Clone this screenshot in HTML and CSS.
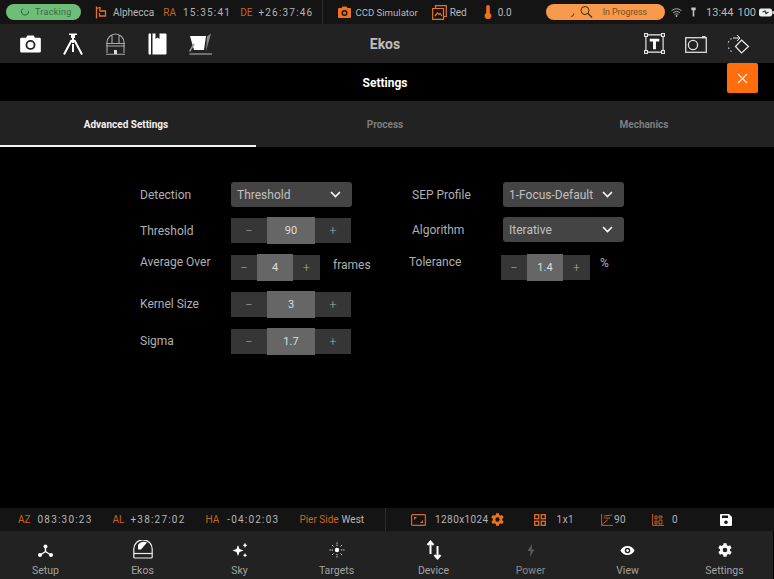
FILE: index.html
```html
<!DOCTYPE html>
<html lang="en">
<head>
  <meta charset="UTF-8" />
  <title>Ekos Settings</title>
  <link rel="stylesheet" href="styles.css">
</head>
<body>
  <div class="status-top">
    <div class="pill-green">
      <svg width="10" height="10" viewBox="0 0 10 10"><path d="M3 1.5A3.6 3.6 0 1 0 8.5 4" fill="none" stroke="#2f5f3c" stroke-width="1"/></svg>
      <span>Tracking</span>
    </div>
    <svg class="flag" width="12" height="13" viewBox="0 0 12 13"><path d="M1.5 0.5V12.5M1.5 2.5L5 1.5V5H10.5V10H4.5V7" fill="none" stroke="#e8722a" stroke-width="1.3"/></svg>
    <span class="txt alphecca">Alphecca</span>
    <span class="lbl ra">RA</span><span class="num val-ra">15:35:41</span>
    <span class="lbl de">DE</span><span class="num val-de">+26:37:46</span>
    <span class="sep sep-top"></span>
    <svg class="ccd" width="13" height="12" viewBox="0 0 13 12"><path fill-rule="evenodd" d="M1 2H3.5L4.5 .5H8.5L9.5 2H12A1 1 0 0 1 13 3V11A1 1 0 0 1 12 12H1A1 1 0 0 1 0 11V3A1 1 0 0 1 1 2ZM6.5 4A3 3 0 1 0 6.5 10A3 3 0 1 0 6.5 4ZM6.5 5.4A1.6 1.6 0 1 1 6.5 8.6A1.6 1.6 0 1 1 6.5 5.4Z" fill="#f0701c"/></svg>
    <span class="txt ccd-name">CCD Simulator</span>
    <svg class="filter" width="15" height="15" viewBox="0 0 15 15"><path d="M3.5 3V.7H14.3V11.5H12M.7 3.5H11.5V14.3H.7ZM3 11L5.5 8L7 9.5L8 8.5L10 11" fill="none" stroke="#e8722a" stroke-width="1.2"/></svg>
    <span class="txt red">Red</span>
    <svg class="thermo" width="8" height="14" viewBox="0 0 8 14"><path d="M2.2 1.8A1.8 1.8 0 0 1 5.8 1.8V8A3.4 3.4 0 1 1 2.2 8Z" fill="#f0701c"/></svg>
    <span class="txt temp">0.0</span>
    <div class="pill-orange">
      <svg width="24" height="14" viewBox="0 0 24 14"><path d="M1 11.5Q3.5 11.5 4 8.5" fill="none" stroke="#4a2a10" stroke-width=".9"/><circle cx="15" cy="5.5" r="4" fill="none" stroke="#4a2a10" stroke-width="1"/><path d="M18 8.5L22 12.5" stroke="#4a2a10" stroke-width="1.1"/></svg>
      <span>In Progress</span>
    </div>
    <svg class="wifi" width="11" height="9" viewBox="0 0 11 9"><path d="M.5 2.7Q5.5-1.3 10.5 2.7M2 4.6Q5.5 1.8 9 4.6M3.5 6.4Q5.5 4.8 7.5 6.4" fill="none" stroke="#bbb" stroke-width=".9"/><circle cx="5.5" cy="8" r=".9" fill="#bbb"/></svg>
    <svg class="key" width="5" height="10" viewBox="0 0 5 10"><path d="M.3 .5H4.7V3.2H3.3V9.5H1.7V3.2H.3Z" fill="#c4c4c4"/></svg>
    <span class="txt clock">13:44</span>
    <span class="txt batt-num">100</span>
    <svg class="batt" width="15" height="9" viewBox="0 0 15 9"><rect x="0" y=".5" width="13" height="8" rx="2" fill="#eee"/><rect x="13.4" y="3" width="1.4" height="3" fill="#eee"/><path d="M3.5 4L6 3L7 5.5L9.5 4" fill="none" stroke="#333" stroke-width="1.2"/></svg>
  </div>

  <div class="toolbar">
    <div class="tool-group">
      <svg class="tool" width="23" height="18" viewBox="0 0 24 20"><path fill-rule="evenodd" d="M2 3H7L8.5 .5H15.5L17 3H22A1.5 1.5 0 0 1 23.5 4.5V18A1.5 1.5 0 0 1 22 19.5H2A1.5 1.5 0 0 1 .5 18V4.5A1.5 1.5 0 0 1 2 3ZM12 5.5A5.5 5.5 0 1 0 12 16.5A5.5 5.5 0 1 0 12 5.5ZM12 7.5A3.5 3.5 0 1 1 12 14.5A3.5 3.5 0 1 1 12 7.5Z" fill="#fff"/></svg>
      <svg class="tool" width="20" height="22" viewBox="0 0 20 22"><path d="M6 .5H14V2H12V5H8V2H6Z" fill="#fff"/><path d="M10 5V10M8.7 7L1 21.5M11.3 7L19 21.5M10 11V19" stroke="#fff" stroke-width="2" fill="none"/></svg>
      <svg class="tool" width="21" height="22" viewBox="0 0 21 22"><path d="M1 21.3H20M2 20V9.5A8.5 8.5 0 0 1 19 9.5V20M1 10.5H20M1 13H20M7 1.5V10.5M14 1.5V10.5" fill="none" stroke="#a8a8a8" stroke-width="1.1"/><path d="M9 17H12V21H9Z" fill="#ddd"/></svg>
      <svg class="tool" width="19" height="22" viewBox="0 0 19 22"><path d="M.5 1.5A1 1 0 0 1 1.5 .5H3V21.5H1.5A1 1 0 0 1 .5 20.5ZM4.5 .5H7.5V6L9.5 4.5L11.5 6V.5H17.5A1 1 0 0 1 18.5 1.5V20.5A1 1 0 0 1 17.5 21.5H4.5Z" fill="#fff"/></svg>
      <svg class="tool" width="23" height="22" viewBox="0 0 23 22"><path d="M1 3H17L15 17H5Z" fill="#fff"/><path d="M18 3.5L22 .5L17 18" fill="#8a8a8a"/><path d="M.5 21H23" stroke="#999" stroke-width="1.3"/><path d="M.5 18.5L5 11" stroke="#999" stroke-width="1.5"/></svg>
    </div>
    <div class="app-title">Ekos</div>
    <div class="tool-group tool-group-right">
      <svg class="tool" width="21" height="21" viewBox="0 0 22 22"><path d="M2 2H20V20H2Z" fill="none" stroke="#eee" stroke-width="1.2"/><g fill="#222" stroke="#eee" stroke-width="1.1"><rect x=".6" y=".6" width="3" height="3"/><rect x="18.4" y=".6" width="3" height="3"/><rect x=".6" y="18.4" width="3" height="3"/><rect x="18.4" y="18.4" width="3" height="3"/></g><path d="M6 6H16V9H12.5V17H9.5V9H6Z" fill="#fff"/></svg>
      <svg class="tool" width="22" height="18" viewBox="0 0 22 18"><rect x=".7" y="2.7" width="20.6" height="14.6" fill="none" stroke="#ddd" stroke-width="1.3"/><circle cx="8" cy="10" r="4.6" fill="none" stroke="#ddd" stroke-width="1.3"/><rect x="17" y="1" width="3.5" height="2.2" fill="#ddd"/></svg>
      <svg class="tool" width="23" height="22" viewBox="0 0 23 22"><path d="M14.5 7L21.5 13.5L14.5 20L8.5 13.5Z" fill="none" stroke="#eee" stroke-width="1.2"/><path d="M6 5H12.5M10 2L13 5L10 8" fill="none" stroke="#eee" stroke-width="1"/><path d="M4.5 5.5A8 8 0 0 0 .8 12M1.5 14.5A8 8 0 0 0 5 19" fill="none" stroke="#ccc" stroke-width="1.1" stroke-dasharray="1.5 2.2"/></svg>
    </div>
  </div>

  <div class="title-bar">
    <span></span>
    <div class="title">Settings</div>
    <button class="close" type="button">
      <svg width="11" height="11" viewBox="0 0 11 11"><path d="M1 1L10 10M10 1L1 10" stroke="#ffe6d6" stroke-width="1.3"/></svg>
    </button>
  </div>

  <div class="tabs">
    <div class="tab active">Advanced Settings</div>
    <div class="tab">Process</div>
    <div class="tab">Mechanics</div>
  </div>

  <main class="settings">
    <div class="col">
      <div class="row row-detection">
        <label>Detection</label>
        <div class="select">Threshold<svg width="11" height="7" viewBox="0 0 11 7"><path d="M1 1L5.5 5.5L10 1" fill="none" stroke="#fff" stroke-width="1.6"/></svg></div>
      </div>
      <div class="row row-threshold">
        <label>Threshold</label>
        <div class="stepper"><span class="btn">−</span><span class="value">90</span><span class="btn">+</span></div>
      </div>
      <div class="row row-average">
        <label class="label-up">Average Over</label>
        <div class="stepper small"><span class="btn">−</span><span class="value">4</span><span class="btn">+</span></div>
        <span class="unit">frames</span>
      </div>
      <div class="row row-kernel">
        <label>Kernel Size</label>
        <div class="stepper"><span class="btn">−</span><span class="value">3</span><span class="btn">+</span></div>
      </div>
      <div class="row row-sigma">
        <label>Sigma</label>
        <div class="stepper"><span class="btn">−</span><span class="value">1.7</span><span class="btn">+</span></div>
      </div>
    </div>
    <div class="col col-right">
      <div class="row row-detection">
        <label>SEP Profile</label>
        <div class="select">1-Focus-Default<svg width="11" height="7" viewBox="0 0 11 7"><path d="M1 1L5.5 5.5L10 1" fill="none" stroke="#fff" stroke-width="1.6"/></svg></div>
      </div>
      <div class="row row-algorithm">
        <label>Algorithm</label>
        <div class="select">Iterative<svg width="11" height="7" viewBox="0 0 11 7"><path d="M1 1L5.5 5.5L10 1" fill="none" stroke="#fff" stroke-width="1.6"/></svg></div>
      </div>
      <div class="row row-tolerance">
        <label class="label-up">Tolerance</label>
        <div class="stepper small"><span class="btn">−</span><span class="value">1.4</span><span class="btn">+</span></div>
        <span class="unit unit-up">%</span>
      </div>
    </div>
  </main>

  <div class="status-bottom">
    <span class="lbl az">AZ</span><span class="num val-az">083:30:23</span>
    <span class="lbl al">AL</span><span class="num val-al">+38:27:02</span>
    <span class="lbl ha">HA</span><span class="num val-ha">-04:02:03</span>
    <span class="lbl pier">Pier Side</span><span class="txt west">West</span>
    <span class="sep sep-bottom"></span>
    <svg class="i-frame" width="15" height="12" viewBox="0 0 15 12"><rect x=".6" y=".6" width="13.8" height="10.8" rx="1" fill="none" stroke="#d9682a" stroke-width="1.2"/><path d="M3 3H6L3 6ZM12 9H9L12 6Z" fill="#d9682a"/></svg>
    <span class="num val-res">1280x1024</span>
    <svg class="i-gear" width="13" height="13" viewBox="4 3 18 18"><path d="M19.4 13a7.5 7.5 0 0 0 0-2l2.1-1.6-2-3.5-2.5 1a7.5 7.5 0 0 0-1.7-1L15 3.2h-4l-.4 2.7a7.5 7.5 0 0 0-1.7 1l-2.5-1-2 3.5L6.6 11a7.5 7.5 0 0 0 0 2l-2.1 1.6 2 3.5 2.5-1a7.5 7.5 0 0 0 1.7 1l.3 2.7h4l.4-2.7a7.5 7.5 0 0 0 1.7-1l2.5 1 2-3.5ZM13 15a3 3 0 1 1 0-6 3 3 0 0 1 0 6Z" fill="#f0701c"/></svg>
    <svg class="i-grid" width="12" height="12" viewBox="0 0 12 12"><g fill="none" stroke="#d9682a" stroke-width="1.4"><rect x=".7" y=".7" width="4" height="4"/><rect x="7.3" y=".7" width="4" height="4"/><rect x=".7" y="7.3" width="4" height="4"/><rect x="7.3" y="7.3" width="4" height="4"/></g></svg>
    <span class="num val-bin">1x1</span>
    <svg class="i-thresh" width="12" height="12" viewBox="0 0 12 12"><path d="M.6 0V11.4H12M.6 11L7 5.5M3 4H9M3 2L11 1" fill="none" stroke="#c25c25" stroke-width="1"/></svg>
    <span class="num val-thresh">90</span>
    <svg class="i-rej" width="12" height="12" viewBox="0 0 12 12"><path d="M.6 0V11.4H12M3 2H5V5H3ZM7 2H10V4H7ZM3 7H5V10H3ZM7 6H10V10H7Z" fill="none" stroke="#c25c25" stroke-width="1"/></svg>
    <span class="num val-rej">0</span>
    <svg class="i-save" width="12" height="12" viewBox="0 0 12 12"><path fill-rule="evenodd" d="M1 0H9L12 3V11A1 1 0 0 1 11 12H1A1 1 0 0 1 0 11V1A1 1 0 0 1 1 0ZM2 1.5V4H8V1.5ZM6 6.5A1.8 1.8 0 1 0 6 10.1A1.8 1.8 0 1 0 6 6.5Z" fill="#fff"/></svg>
  </div>

  <nav class="bottom-nav">
    <a><svg width="15" height="15" viewBox="1.5 1.5 15 15"><path d="M9 6V10M9 10L4.5 13M9 10L13.5 13" stroke="#fff" stroke-width="1.4"/><circle cx="9" cy="5" r="2" fill="#fff"/><circle cx="3.5" cy="13.5" r="2" fill="#fff"/><circle cx="14.5" cy="13.5" r="2" fill="#fff"/></svg>Setup</a>
    <a><svg width="20" height="20" viewBox="0 0 20 20"><path d="M1.5 18A1 1 0 0 1 .8 17V9A9 9 0 0 1 19.2 9V17A1 1 0 0 1 18.5 18Z" fill="none" stroke="#eee" stroke-width="1.2"/><path d="M.8 13.5H19.2" stroke="#eee" stroke-width="1.2"/><path d="M5 9.5V5A7 7 0 0 1 14 2.5L8 9.5Z" fill="#fff"/></svg>Ekos</a>
    <a><svg width="16" height="16" viewBox="0 0 16 16"><path d="M6 3L7.5 7L11.5 8.5L7.5 10L6 14L4.5 10L.5 8.5L4.5 7ZM13 .5L13.8 2.5L15.5 3.3L13.8 4L13 6L12.2 4L10.5 3.3L12.2 2.5ZM13 11L13.7 12.5L15.2 13.2L13.7 13.9L13 15.5L12.3 13.9L10.8 13.2L12.3 12.5Z" fill="#fff"/></svg>Sky</a>
    <a><svg width="16" height="16" viewBox="0 0 16 16"><circle cx="8" cy="8" r="2.2" fill="#fff"/><path d="M8 .5V4M8 12V15.5M.5 8H4M12 8H15.5M3 3L5 5M13 3L11 5M3 13L5 11M13 13L11 11" stroke="#ddd" stroke-width="1" stroke-dasharray="1.3 .9"/></svg>Targets</a>
    <a><svg width="16" height="20" viewBox="0 0 16 20"><path d="M4.5 14V1.5M1.5 5L4.5 1.5L7.5 5M11.5 6V18.5M8.5 15L11.5 18.5L14.5 15" fill="none" stroke="#fff" stroke-width="2"/></svg>Device</a>
    <a class="off"><svg width="8" height="13" viewBox="0 0 8 13"><path d="M5 0L.5 7H3.5L3 13L7.5 5.5H4.5Z" fill="#5c5c5c"/></svg>Power</a>
    <a><svg width="15" height="11" viewBox="0 0 16 12"><path fill-rule="evenodd" d="M8 1C4.5 1 1.6 3.1.3 6C1.6 8.9 4.5 11 8 11S14.4 8.9 15.7 6C14.4 3.1 11.5 1 8 1ZM8 3A3 3 0 1 1 8 9A3 3 0 1 1 8 3ZM8 4.5A1.5 1.5 0 1 0 8 7.5A1.5 1.5 0 1 0 8 4.5Z" fill="#fff"/></svg>View</a>
    <a><svg width="14" height="14" viewBox="4 3 18 18"><path d="M19.4 13a7.5 7.5 0 0 0 0-2l2.1-1.6-2-3.5-2.5 1a7.5 7.5 0 0 0-1.7-1L15 3.2h-4l-.4 2.7a7.5 7.5 0 0 0-1.7 1l-2.5-1-2 3.5L6.6 11a7.5 7.5 0 0 0 0 2l-2.1 1.6 2 3.5 2.5-1a7.5 7.5 0 0 0 1.7 1l.3 2.7h4l.4-2.7a7.5 7.5 0 0 0 1.7-1l2.5 1 2-3.5ZM13 15a3 3 0 1 1 0-6 3 3 0 0 1 0 6Z" fill="#fff"/></svg>Settings</a>
  </nav>
</body>
</html>
```

FILE: styles.css
```css
* {
  box-sizing: border-box;
}

html, body {
  height: 100%;
}

body {
  margin: 0;
  width: 774px;
  height: 579px;
  overflow: hidden;
  display: flex;
  flex-direction: column;
  background: #000;
  color: #ccc;
  font-family: Roboto, "Liberation Sans", sans-serif;
  font-size: 10px;
}

svg {
  display: block;
  flex: none;
}

.status-top,
.status-bottom {
  display: flex;
  align-items: center;
  white-space: nowrap;
  background: #141414;
}

.status-top {
  height: 24px;
  padding-left: 6px;
}

.status-bottom {
  height: 23px;
  padding-left: 18px;
}

.txt {
  color: #b8b8b8;
  font-size: 10px;
}

.num {
  color: #b4b4b4;
  font-size: 10px;
  letter-spacing: 1.2px;
}

.lbl {
  color: #c9641f;
  font-size: 10px;
}

.sep {
  width: 1px;
  align-self: stretch;
  background: #2c2c2c;
}

.pill-green {
  width: 76px;
  height: 16px;
  border-radius: 8px;
  background: #6fbe78;
  color: #3a6a46;
  display: flex;
  align-items: center;
  padding-left: 14px;
  gap: 5px;
  font-size: 9px;
  letter-spacing: .3px;
}

.flag { margin-left: 14px; }
.alphecca { margin-left: 6px; }
.ra { margin-left: 9px; }
.val-ra { margin-left: 7px; }
.de { margin-left: 9px; }
.val-de { margin-left: 6px; }
.sep-top { margin-left: 9px; }
.ccd { margin-left: 15px; }
.ccd-name { margin-left: 4px; font-size: 9.6px; }
.filter { margin-left: 14px; }
.red { margin-left: 3px; }
.thermo { margin-left: 17px; }
.temp { margin-left: 6px; }

.pill-orange {
  width: 121px;
  height: 16px;
  margin-left: 34px;
  border-radius: 8px;
  background: #f79a4c;
  color: #7d4a1c;
  display: flex;
  align-items: center;
  padding-left: 24px;
  gap: 9px;
  font-size: 8.8px;
}

.wifi { margin-left: 6px; }
.key { margin-left: 9px; }
.clock { margin-left: 10px; }
.batt-num { margin-left: 4px; }
.batt { margin-left: 3px; }

.status-top .clock,
.status-top .batt-num {
  font-size: 11px;
}

.toolbar {
  height: 39px;
  padding-right: 4px;
  background: #222;
  display: grid;
  grid-template-columns: 1fr auto 1fr;
  align-items: center;
}

.tool-group {
  justify-self: start;
  display: grid;
  grid-template-columns: repeat(5, 42.5px);
  justify-items: center;
  align-items: center;
  padding-left: 9px;
}

.tool-group-right {
  justify-self: end;
  grid-template-columns: repeat(3, 42px);
  padding-left: 0;
  padding-right: 11px;
}

.app-title {
  font-size: 14px;
  font-weight: 700;
  color: #bdbdbd;
}

.title-bar {
  height: 38px;
  padding-right: 4px;
  display: grid;
  grid-template-columns: 1fr auto 1fr;
  align-items: center;
}

.title {
  color: #fff;
  font-size: 12px;
  font-weight: 700;
  padding-top: 2px;
}

.close {
  justify-self: end;
  align-self: start;
  width: 31px;
  height: 30px;
  margin-right: 12px;
  border: 0;
  border-radius: 2px;
  background: #ff6d0d;
  display: flex;
  align-items: center;
  justify-content: center;
  padding: 0;
}

.tabs {
  height: 46px;
  display: grid;
  grid-template-columns: 256px 258px 260px;
  background: #222;
}

.tab {
  display: flex;
  align-items: center;
  justify-content: center;
  color: #7e7e7e;
  font-size: 10px;
  font-weight: 700;
  padding-top: 1px;
}

.tab.active {
  color: #f2f2f2;
  border-bottom: 2px solid #f4f4f4;
  padding-right: 4px;
  padding-top: 3px;
}

.settings {
  flex: 1;
  display: flex;
  padding: 35px 0 0 140px;
}

.col {
  width: 272px;
  display: flex;
  flex-direction: column;
}

.row {
  display: flex;
  align-items: center;
}

.row label {
  width: 91px;
  color: #b0b0b0;
  font-size: 12px;
}

.label-up {
  align-self: flex-start;
  line-height: 16px;
}

.row-threshold { margin-top: 10px; }
.row-algorithm { margin-top: 10px; }
.row-average { margin-top: 10px; }
.row-kernel { margin-top: 10px; }
.row-sigma { margin-top: 10px; }
.row-tolerance { margin-top: 12px; margin-left: -3px; }

.row-kernel label,
.row-sigma label {
  margin-top: -2px;
}

.row-tolerance label {
  width: 92px;
}

.select {
  width: 121px;
  height: 25px;
  border-radius: 3px;
  background: #444;
  color: #c0c0c0;
  font-size: 12px;
  padding: 0 11px 0 6px;
  display: flex;
  align-items: center;
  justify-content: space-between;
}

.stepper {
  height: 27px;
  display: grid;
  grid-template-columns: 36px 48px 36px;
  align-items: center;
  color: #ccc;
}

.stepper.small {
  grid-template-columns: 26px 36px 27px;
}

.btn {
  height: 25px;
  background: #363636;
  color: #a6a6a6;
  font-size: 13px;
  font-weight: 300;
  display: flex;
  align-items: center;
  justify-content: center;
}

.value {
  height: 27px;
  background: #666;
  color: #ddd;
  font-size: 11px;
  display: flex;
  align-items: center;
  justify-content: center;
}

.unit {
  margin-left: 13px;
  margin-top: -6px;
  color: #b0b0b0;
  font-size: 12px;
}

.unit-up {
  margin-left: 10px;
  margin-top: -9px;
}

.val-az { margin-left: 7px; }
.al { margin-left: 20px; }
.val-al { margin-left: 6px; }
.ha { margin-left: 20px; }
.val-ha { margin-left: 8px; }
.pier { margin-left: 20px; }
.west { margin-left: 3px; }
.sep-bottom { margin-left: 21px; }
.i-frame { margin-left: 25px; }
.val-res { margin-left: 9px; letter-spacing: .4px; }
.i-gear { margin-left: 2px; }
.i-grid { margin-left: 30px; }
.val-bin { margin-left: 11px; letter-spacing: .4px; }
.i-thresh { margin-left: 27px; }
.val-thresh { margin-left: 1px; letter-spacing: .4px; }
.i-rej { margin-left: 26px; }
.val-rej { margin-left: 8px; }
.i-save { margin-left: 41px; }

.bottom-nav {
  height: 48px;
  width: 776px;
  margin-left: -3px;
  background: #222;
  display: grid;
  grid-template-columns: repeat(8, 97px);
}

.bottom-nav a {
  display: grid;
  grid-template-rows: 26px 16px;
  justify-items: center;
  align-items: center;
  padding-top: 6px;
  color: #a4a4a4;
  font-size: 10.5px;
  line-height: 12px;
}

.bottom-nav a.off {
  color: #8a8a8a;
}
```
